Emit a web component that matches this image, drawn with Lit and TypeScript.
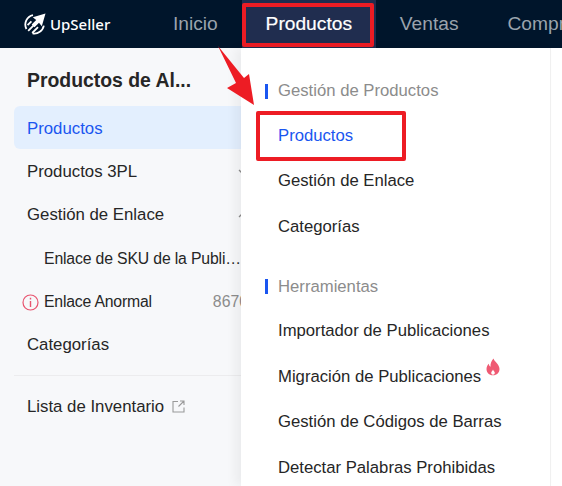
import { LitElement, html, css, svg } from "lit";
import { customElement } from "lit/decorators.js";

const chevronDown = svg`<path d="M2 4l4 4 4-4" fill="none" stroke="#8c8c8c" stroke-width="1.3"/>`;
const chevronUp = svg`<path d="M2 8l4-4 4 4" fill="none" stroke="#8c8c8c" stroke-width="1.3"/>`;

@customElement("app-root")
export class AppRoot extends LitElement {
  static styles = css`
    :host {
      display: block;
      position: relative;
      width: 562px;
      height: 486px;
      overflow: hidden;
      background: #fff;
      font-family: "Liberation Sans", Arial, sans-serif;
      font-size: 16.8px;
      color: #262626;
    }

    .topbar {
      height: 48px;
      background: #00152b;
      display: flex;
      align-items: center;
      overflow: hidden;
    }

    .logo {
      width: 173px;
      flex-shrink: 0;
      padding-left: 24px;
      box-sizing: border-box;
      display: flex;
      align-items: center;
      gap: 4px;
      color: #fff;
      font-family: "Noto Sans", sans-serif;
      font-size: 15px;
      font-weight: 500;
    }

    .nav {
      display: flex;
      align-items: center;
      height: 48px;
      font-size: 19.2px;
      color: #9aa3ad;
      white-space: nowrap;
    }

    .nav-item {
      flex-shrink: 0;
    }

    .nav-item.active {
      width: 134px;
      height: 48px;
      margin: 0 24px 0 24px;
      background: #202d4f;
      color: #fff;
      -webkit-text-stroke: 0.2px #fff;
      display: flex;
      align-items: center;
      justify-content: center;
      position: relative;
    }

    .nav-item.active::after {
      content: "";
      position: absolute;
      left: 0;
      top: 3px;
      width: 132px;
      height: 44px;
      box-sizing: border-box;
      border: 4px solid #ed1c24;
      border-radius: 2px;
    }

    .nav-item.next {
      margin-left: 49px;
    }

    .body {
      display: flex;
      height: 438px;
    }

    .sidebar {
      width: 241px;
      flex-shrink: 0;
      overflow: hidden;
      background: #f7f8fa;
    }

    .sidebar-inner {
      width: 262px;
      padding: 0 0 0 14px;
      box-sizing: border-box;
    }

    .side-title {
      height: 58px;
      padding: 6px 0 0 13px;
      box-sizing: border-box;
      display: flex;
      align-items: center;
      font-size: 19.4px;
      font-weight: 700;
    }

    .side-item {
      height: 43.2px;
      box-sizing: border-box;
      padding: 2px 0 0 13px;
      display: flex;
      align-items: center;
      position: relative;
      white-space: nowrap;
    }

    .side-item.active {
      background: #e3effe;
      color: #1a56f0;
      border-radius: 6px;
    }

    .side-item.sub {
      padding: 4px 0 0 30px;
    }

    .sub-text {
      width: 201px;
      overflow: hidden;
      text-overflow: ellipsis;
      font-size: 15.8px;
      letter-spacing: -0.16px;
    }

    .side-item.warn {
      padding: 4px 0 0 8px;
      gap: 6px;
      font-size: 15.8px;
      letter-spacing: -0.2px;
    }

    .side-item.warn svg {
      margin-right: -1px;
    }

    .side-item .grow {
      flex: 1;
    }

    .side-item svg.chev {
      width: 12px;
      height: 12px;
      margin-right: 13px;
    }

    .count {
      color: #8c8c8c;
      margin-right: 14px;
      letter-spacing: 0;
    }

    .side-rule {
      height: 1px;
      background: #ececee;
      margin: 10px 0 8px 0;
    }

    .ext {
      margin-left: 8px;
    }

    .panel {
      width: 310px;
      flex-shrink: 0;
      box-sizing: border-box;
      background: #fff;
      border-right: 1px solid #f0f0f0;
      box-shadow: -6px 0 10px rgba(0, 0, 0, 0.05);
      padding: 32px 0 0 24px;
      position: relative;
    }

    .group-head {
      height: 22px;
      display: flex;
      align-items: center;
      gap: 10px;
      color: #8c8c8c;
      font-size: 16.7px;
    }

    .group-head::before {
      content: "";
      width: 3px;
      height: 15px;
      background: #1a56f0;
    }

    .group {
      margin-bottom: 26px;
    }

    .links {
      padding-top: 11px;
    }

    .group + .group .links {
      padding-top: 10.5px;
    }

    .link {
      height: 45.6px;
      display: flex;
      align-items: center;
      padding-left: 13px;
      white-space: nowrap;
      font-size: 16.7px;
    }

    .link.active {
      color: #1a56f0;
      position: relative;
    }

    .link.active::after {
      content: "";
      position: absolute;
      left: -9px;
      top: -2px;
      width: 150px;
      height: 50px;
      box-sizing: border-box;
      border: 4px solid #ed1c24;
      border-radius: 2px;
    }

    .fire {
      align-self: flex-start;
      margin: 4px 0 0 5px;
    }

    .arrow {
      position: absolute;
      left: 0;
      top: 0;
      pointer-events: none;
    }
  `;

  render() {
    return html`
      <div class="topbar">
        <div class="logo">
          <svg width="22" height="22" viewBox="0 0 22 22">
            <path d="M21.5.5 17.8 13.2 15 9.800 10.500 14.300 7.700 11.500 12.200 7 8.800 4.200Z" fill="#fff" />
            <path d="M9 2.200A9.600 9.600 0 0 0 2.400 16" fill="none" stroke="#fff" stroke-width="1.800" />
            <path d="M19.800 12.600A9.600 9.600 0 0 1 8.600 20.400" fill="none" stroke="#fff" stroke-width="1.800" />
            <path d="M4.200 17.800 10.600 11.400M8.200 20 14 14.200M3.600 12.200 7.400 8.400" fill="none" stroke="#fff" stroke-width="1.800" />
          </svg>
          <span>UpSeller</span>
        </div>
        <div class="nav">
          <div class="nav-item">Inicio</div>
          <div class="nav-item active">Productos</div>
          <div class="nav-item">Ventas</div>
          <div class="nav-item next">Compras</div>
        </div>
      </div>

      <div class="body">
        <div class="sidebar">
          <div class="sidebar-inner">
            <div class="side-title">Productos de Al...</div>
            <div class="side-item active">Productos</div>
            <div class="side-item">
              <span class="grow">Productos 3PL</span>
              <svg class="chev" viewBox="0 0 12 12">${chevronDown}</svg>
            </div>
            <div class="side-item">
              <span class="grow">Gestión de Enlace</span>
              <svg class="chev" viewBox="0 0 12 12">${chevronUp}</svg>
            </div>
            <div class="side-item sub">
              <span class="sub-text">Enlace de SKU de la Publicación</span>
            </div>
            <div class="side-item warn">
              <svg width="17" height="17" viewBox="0 0 17 17">
                <circle cx="8.500" cy="8.500" r="7.500" fill="none" stroke="#e8546f" stroke-width="1.200" />
                <path d="M8.500 3.800v1.600M8.500 7v6" stroke="#e8546f" stroke-width="1.400" />
              </svg>
              <span class="grow">Enlace Anormal</span>
              <span class="count">8670</span>
            </div>
            <div class="side-item">Categorías</div>
            <div class="side-rule"></div>
            <div class="side-item">
              Lista de Inventario
              <svg class="ext" width="13" height="13" viewBox="0 0 13 13">
                <path d="M6 1.500H1v10.500h11V7.500M8 1h4v4M12 1 6.500 6.500" fill="none" stroke="#9a9a9a" stroke-width="1.100" />
              </svg>
            </div>
          </div>
        </div>

        <div class="panel">
          <div class="group">
            <div class="group-head">Gestión de Productos</div>
            <div class="links">
              <div class="link active">Productos</div>
              <div class="link">Gestión de Enlace</div>
              <div class="link">Categorías</div>
            </div>
          </div>
          <div class="group">
            <div class="group-head">Herramientas</div>
            <div class="links">
              <div class="link">Importador de Publicaciones</div>
              <div class="link">
                Migración de Publicaciones
                <svg class="fire" width="14" height="18" viewBox="0 0 14 18">
                  <path d="M7.500.500C8 3.500 13.500 6 13.500 11c0 3.500-2.600 6.300-6.500 6.300S.500 14.500.500 11c0-2.300 1-4 2.300-5.300.2 1.500.8 2.500 1.700 3C4.300 5.500 5.500 2.500 7.500.500Z" fill="#ef5a73" />
                  <path d="M7 11.500c.4 1.300 1.800 2 1.800 3.300 0 1.200-.8 2-1.800 2s-1.800-.8-1.800-2c0-1.300 1.400-2 1.800-3.300Z" fill="#fff" />
                </svg>
              </div>
              <div class="link">Gestión de Códigos de Barras</div>
              <div class="link">Detectar Palabras Prohibidas</div>
            </div>
          </div>
        </div>
      </div>

      <svg class="arrow" width="562" height="486" viewBox="0 0 562 486">
        <polygon points="218,46 236,83 227,88 254,105 249,74 244,78" fill="#ed1c24" />
      </svg>
    `;
  }
}
